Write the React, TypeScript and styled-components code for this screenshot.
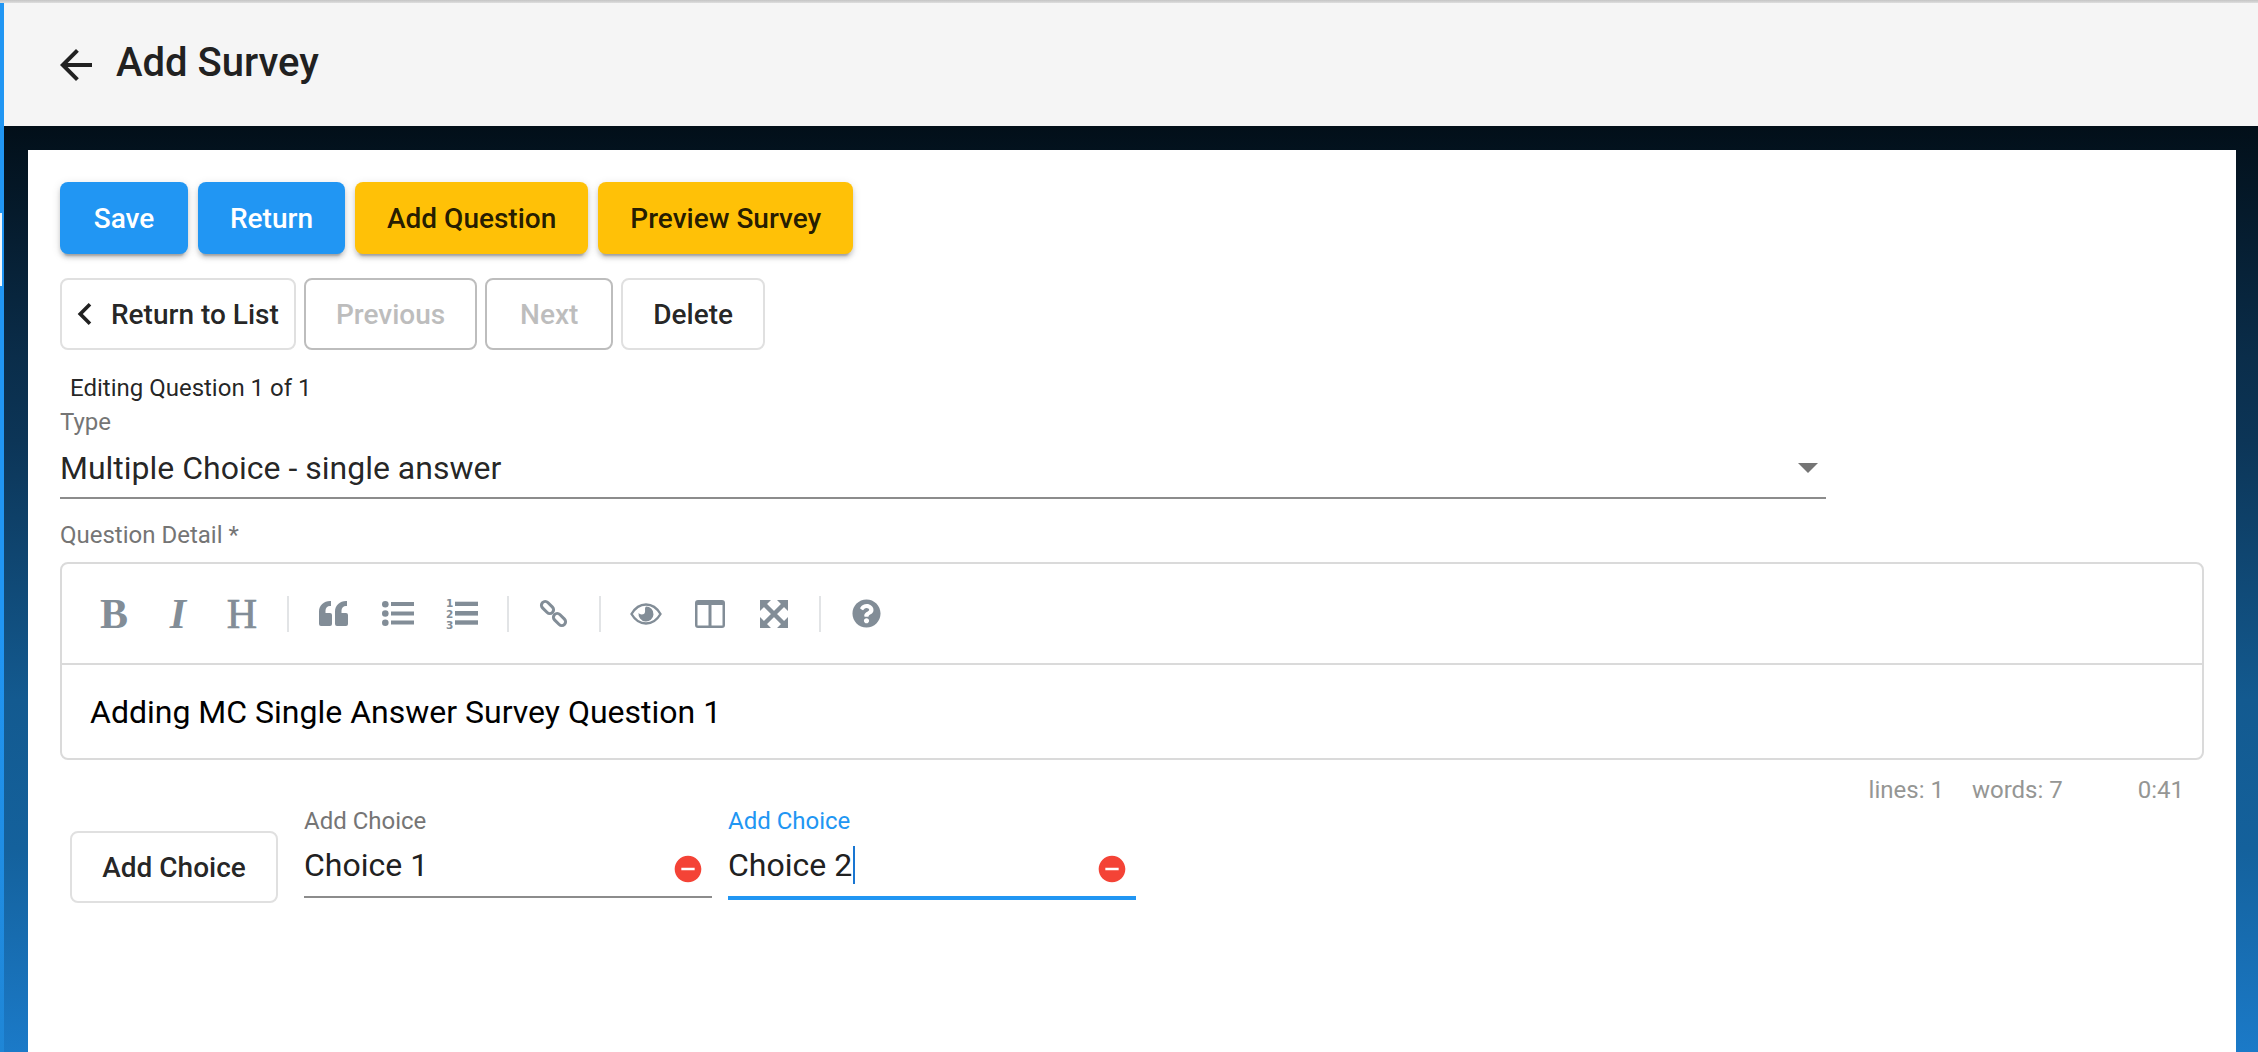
import React from 'react';
import styled, { createGlobalStyle } from 'styled-components';
import { FaQuestionCircle } from 'react-icons/fa';

const GlobalStyle = createGlobalStyle`
  html, body {
    margin: 0;
    padding: 0;
    background: #fff;
  }
  * {
    box-sizing: border-box;
  }
`;

const Page = styled.div`
  display: flex;
  flex-direction: column;
  width: 2258px;
  height: 1052px;
  overflow: hidden;
  font-family: Roboto, "Liberation Sans", sans-serif;
  color: rgba(0, 0, 0, 0.87);
`;

const TopEdge = styled.div`
  flex: none;
  height: 3px;
  background: linear-gradient(#c4c4c4, #dedede);
`;

const Shell = styled.div`
  flex: 1;
  display: flex;
  min-height: 0;
`;

const SideEdge = styled.div`
  position: relative;
  flex: none;
  width: 4px;
  background: linear-gradient(#2196f3 0%, #2196f3 60%, #1f86d6 100%);

  &::after {
    content: '';
    position: absolute;
    left: 0;
    top: 210px;
    width: 2px;
    height: 73px;
    background: #f2f7fb;
  }
`;

const Main = styled.div`
  flex: 1;
  display: flex;
  flex-direction: column;
  min-width: 0;
`;

const Header = styled.header`
  flex: none;
  display: flex;
  align-items: center;
  height: 123px;
  padding-left: 48px;
  background: #f5f5f5;
`;

const Title = styled.h1`
  margin: 0 0 3px 16px;
  font-size: 40px;
  line-height: 48px;
  font-weight: 500;
  color: #212121;
`;

const Backdrop = styled.div`
  flex: 1;
  display: flex;
  min-height: 0;
  padding: 24px 22px 0 24px;
  background: linear-gradient(
    #020f19 0%,
    #0a2d4a 25%,
    #0c3557 34%,
    #135a90 62%,
    #14619c 78%,
    #1b7ac8 100%
  );
`;

const Card = styled.main`
  flex: 1;
  padding: 32px;
  background: #fff;
`;

const ButtonRow = styled.div<{ $gap: number; $top?: number }>`
  display: flex;
  gap: ${({ $gap }) => $gap}px;
  margin-top: ${({ $top }) => $top || 0}px;
`;

type Tone = 'primary' | 'secondary' | 'outlined' | 'disabled';

const toneStyles: Record<Tone, string> = {
  primary: `
    padding: 0 32px;
    background: #2196f3;
    color: #fff;
    box-shadow: 0 6px 2px -4px rgba(0,0,0,.2), 0 4px 4px 0 rgba(0,0,0,.14), 0 2px 10px 0 rgba(0,0,0,.12);
  `,
  secondary: `
    padding: 0 32px;
    background: #ffc107;
    color: rgba(0,0,0,.87);
    box-shadow: 0 6px 2px -4px rgba(0,0,0,.2), 0 4px 4px 0 rgba(0,0,0,.14), 0 2px 10px 0 rgba(0,0,0,.12);
  `,
  outlined: `
    padding: 0 30px;
    background: #fff;
    border: 2px solid #e0e0e0;
    color: rgba(0,0,0,.87);
  `,
  disabled: `
    padding: 0 30px;
    background: #fff;
    border: 2px solid #bdbdbd;
    color: #bdbdbd;
  `,
};

const Button = styled.button<{ $tone: Tone }>`
  display: inline-flex;
  align-items: center;
  justify-content: center;
  min-width: 128px;
  height: 72px;
  border: 0;
  border-radius: 8px;
  font-family: inherit;
  font-size: 28px;
  font-weight: 500;
  white-space: nowrap;
  ${({ $tone }) => toneStyles[$tone]}
`;

const BackToList = styled(Button)`
  justify-content: flex-start;
  width: 236px;
  padding: 0 0 0 1px;
`;

const BackLabel = styled.span`
  margin-left: 4px;
`;

const AddChoice = styled(Button)`
  flex: none;
  width: 208px;
  margin-top: 24px;
`;

const EditingNote = styled.div`
  margin: 24px 0 0 10px;
  font-size: 24px;
  line-height: 28px;
`;

const FieldLabel = styled.label<{ $focused?: boolean }>`
  display: block;
  font-size: 24px;
  line-height: 28px;
  color: ${({ $focused }) => ($focused ? '#2196f3' : '#757575')};
`;

const TypeField = styled.div`
  width: 1766px;
  margin-top: 6px;
`;

const SelectValue = styled.div`
  display: flex;
  align-items: center;
  justify-content: space-between;
  height: 63px;
  padding: 3px 8px 0 0;
  border-bottom: 2px solid #8c8c8c;
  font-size: 32px;
`;

const DetailField = styled.div`
  margin-top: 22px;
`;

const Editor = styled.div`
  width: 2144px;
  height: 198px;
  margin-top: 13px;
  border: 2px solid #dadada;
  border-radius: 8px;
`;

const Toolbar = styled.div`
  display: flex;
  align-items: center;
  height: 101px;
  padding: 0 20px;
  border-bottom: 2px solid #dadada;
`;

const ToolButton = styled.span`
  display: flex;
  align-items: center;
  justify-content: center;
  width: 64px;
  height: 60px;
  color: #828d97;
`;

const SerifGlyph = styled.span<{ $italic?: boolean; $light?: boolean }>`
  font-family: "Liberation Serif", "Times New Roman", serif;
  font-size: 42px;
  line-height: 42px;
  font-weight: ${({ $light }) => ($light ? 400 : 700)};
  font-style: ${({ $italic }) => ($italic ? 'italic' : 'normal')};
  -webkit-text-stroke: ${({ $light }) => ($light ? '0.7px #828d97' : '0')};
`;

const ToolDivider = styled.i`
  flex: none;
  width: 28px;
  display: flex;
  justify-content: center;

  &::before {
    content: '';
    width: 2px;
    height: 36px;
    background: #e2e4e6;
  }
`;

const EditorBody = styled.div`
  display: flex;
  align-items: center;
  height: 93px;
  padding-left: 28px;
  font-size: 32px;
  color: #000;
`;

const StatusBar = styled.div`
  display: flex;
  justify-content: flex-end;
  width: 2144px;
  height: 28px;
  margin-top: 16px;
  padding-right: 20px;
  font-size: 24px;
  line-height: 28px;
  color: #959694;
`;

const StatusItem = styled.span<{ $left: number }>`
  margin-left: ${({ $left }) => $left}px;
`;

const ChoiceRow = styled.div`
  display: flex;
  align-items: flex-start;
  margin: 3px 0 0 10px;
`;

const ChoiceField = styled.div<{ $left: number }>`
  flex: none;
  width: 408px;
  margin-left: ${({ $left }) => $left}px;
`;

const ChoiceInput = styled.div<{ $focused?: boolean }>`
  display: flex;
  align-items: center;
  justify-content: space-between;
  height: ${({ $focused }) => ($focused ? 65 : 63)}px;
  padding: 0 8px 0 0;
  border-bottom: ${({ $focused }) => ($focused ? '4px solid #2196f3' : '2px solid #8c8c8c')};
  font-size: 32px;
  color: #212121;
`;

const ChoiceText = styled.span`
  display: inline-flex;
  align-items: center;
  margin-bottom: 2px;
`;

const Caret = styled.span`
  width: 2px;
  height: 38px;
  margin-left: 1px;
  background: #1976d2;
`;

const RemoveIcon = styled.svg`
  flex: none;
  width: 32px;
  height: 32px;
  margin-top: 7px;
  fill: #f44336;
`;

const Icon = styled.svg`
  display: block;
  fill: currentColor;
`;

const BackIcon = styled(Icon)`
  color: #212121;
`;

const DropIcon = styled(Icon)`
  color: #757575;
`;

const Digit = styled.text`
  font-family: "DejaVu Sans", sans-serif;
  font-size: 10.500px;
  font-weight: 700;
`;

const BackArrow = () => (
  <BackIcon width="48" height="48" viewBox="0 0 24 24">
    <path d="M20 11H7.83l5.59-5.59L12 4l-8 8 8 8 1.41-1.41L7.83 13H20v-2z" />
  </BackIcon>
);

const ChevronLeft = () => (
  <Icon width="44" height="44" viewBox="0 0 24 24">
    <path d="M15.41 7.41L14 6l-6 6 6 6 1.41-1.41L10.83 12z" />
  </Icon>
);

const DropArrow = () => (
  <DropIcon width="20" height="10" viewBox="0 0 20 10">
    <polygon points="0,0 20,0 10,10" />
  </DropIcon>
);

const Remove = () => (
  <RemoveIcon viewBox="0 0 24 24">
    <path d="M12 2C6.48 2 2 6.48 2 12s4.48 10 10 10 10-4.48 10-10S17.52 2 12 2zm5 11H7v-2h10v2z" />
  </RemoveIcon>
);

const QuoteIcon = () => (
  <Icon width="30" height="25" viewBox="0 0 30 25">
    <path d="M2 25h9a2 2 0 0 0 2-2v-9a2 2 0 0 0-2-2H6.5V9.5C6.5 7 8.5 5 11 5h1V0h-1C5 0 0 4.5 0 10.5V23a2 2 0 0 0 2 2z" />
    <path d="M18 25h9a2 2 0 0 0 2-2v-9a2 2 0 0 0-2-2h-4.500V9.500C22.500 7 24.500 5 27 5h1V0h-1c-6 0-11 4.500-11 10.500V23a2 2 0 0 0 2 2z" />
  </Icon>
);

const BulletIcon = () => (
  <Icon width="32" height="25" viewBox="0 0 32 25">
    <circle cx="3.300" cy="3.300" r="3.300" />
    <circle cx="3.300" cy="12.500" r="3.300" />
    <circle cx="3.300" cy="21.700" r="3.300" />
    <rect x="9" y="1" width="23" height="4" />
    <rect x="9" y="10.500" width="23" height="4" />
    <rect x="9" y="19.500" width="23" height="4" />
  </Icon>
);

const NumberIcon = () => (
  <Icon width="32" height="32" viewBox="0 0 32 32">
    <Digit x="0" y="8.500">1</Digit>
    <Digit x="0" y="19.500">2</Digit>
    <Digit x="0" y="31">3</Digit>
    <rect x="9" y="3.700" width="23" height="4.300" />
    <rect x="9" y="13" width="23" height="4.600" />
    <rect x="9" y="22.300" width="23" height="4.400" />
  </Icon>
);

const LinkIcon = () => (
  <Icon width="30" height="30" viewBox="0 0 30 30">
    <g fill="none" stroke="currentColor" strokeWidth="3">
      <rect x="1.500" y="4.750" width="14" height="7.500" rx="3.700" transform="rotate(45 8.500 8.500)" />
      <rect x="13.500" y="16.750" width="14" height="7.500" rx="3.700" transform="rotate(45 20.500 20.500)" />
    </g>
  </Icon>
);

const EyeIcon = () => (
  <Icon width="32" height="22" viewBox="0 0 32 22">
    <path
      d="M1.500 11C5 5 10 1.500 16 1.500S27 5 30.500 11C27 17 22 20.500 16 20.500S5 17 1.500 11z"
      fill="none"
      stroke="currentColor"
      strokeWidth="2.400"
    />
    <path d="M16 3.500a7.500 7.500 0 1 1-7.400 6.300c.6 1 1.700 1.700 3 1.700a3.500 3.500 0 0 0 3.500-3.500c0-1.800-.5-3.200.900-4.500z" />
  </Icon>
);

const ColumnsIcon = () => (
  <Icon width="30" height="28" viewBox="0 0 30 28">
    <path d="M3 0h24a3 3 0 0 1 3 3v22a3 3 0 0 1-3 3H3a3 3 0 0 1-3-3V3a3 3 0 0 1 3-3zm-.500 5v20.500h11V5zm14 0v20.500h11V5z" fillRule="evenodd" />
  </Icon>
);

const ExpandIcon = () => (
  <Icon width="28" height="28" viewBox="0 0 28 28">
    <path d="M0 0h11L0 11zM28 0v11L17 0zM0 28V17l11 11zM28 28H17l11-11z" />
    <path d="M4 4l20 20M24 4L4 24" fill="none" stroke="currentColor" strokeWidth="4.500" />
  </Icon>
);

const App: React.FC = () => (
  <Page>
    <GlobalStyle />
    <TopEdge />
    <Shell>
      <SideEdge />
      <Main>
        <Header>
          <BackArrow />
          <Title>Add Survey</Title>
        </Header>
        <Backdrop>
          <Card>
            <ButtonRow $gap={10}>
              <Button $tone="primary">Save</Button>
              <Button $tone="primary">Return</Button>
              <Button $tone="secondary">Add Question</Button>
              <Button $tone="secondary">Preview Survey</Button>
            </ButtonRow>
            <ButtonRow $gap={8} $top={24}>
              <BackToList $tone="outlined">
                <ChevronLeft />
                <BackLabel>Return to List</BackLabel>
              </BackToList>
              <Button $tone="disabled">Previous</Button>
              <Button $tone="disabled">Next</Button>
              <Button $tone="outlined">Delete</Button>
            </ButtonRow>
            <EditingNote>Editing Question 1 of 1</EditingNote>
            <TypeField>
              <FieldLabel>Type</FieldLabel>
              <SelectValue>
                <span>Multiple Choice - single answer</span>
                <DropArrow />
              </SelectValue>
            </TypeField>
            <DetailField>
              <FieldLabel>Question Detail *</FieldLabel>
              <Editor>
                <Toolbar>
                  <ToolButton><SerifGlyph>B</SerifGlyph></ToolButton>
                  <ToolButton><SerifGlyph $italic>I</SerifGlyph></ToolButton>
                  <ToolButton><SerifGlyph $light>H</SerifGlyph></ToolButton>
                  <ToolDivider />
                  <ToolButton><QuoteIcon /></ToolButton>
                  <ToolButton><BulletIcon /></ToolButton>
                  <ToolButton><NumberIcon /></ToolButton>
                  <ToolDivider />
                  <ToolButton><LinkIcon /></ToolButton>
                  <ToolDivider />
                  <ToolButton><EyeIcon /></ToolButton>
                  <ToolButton><ColumnsIcon /></ToolButton>
                  <ToolButton><ExpandIcon /></ToolButton>
                  <ToolDivider />
                  <ToolButton><FaQuestionCircle size={29} /></ToolButton>
                </Toolbar>
                <EditorBody>Adding MC Single Answer Survey Question 1</EditorBody>
              </Editor>
            </DetailField>
            <StatusBar>
              <StatusItem $left={0}>lines: 1</StatusItem>
              <StatusItem $left={28}>words: 7</StatusItem>
              <StatusItem $left={75}>0:41</StatusItem>
            </StatusBar>
            <ChoiceRow>
              <AddChoice $tone="outlined">Add Choice</AddChoice>
              <ChoiceField $left={26}>
                <FieldLabel>Add Choice</FieldLabel>
                <ChoiceInput>
                  <ChoiceText>Choice 1</ChoiceText>
                  <Remove />
                </ChoiceInput>
              </ChoiceField>
              <ChoiceField $left={16}>
                <FieldLabel $focused>Add Choice</FieldLabel>
                <ChoiceInput $focused>
                  <ChoiceText>
                    Choice 2
                    <Caret />
                  </ChoiceText>
                  <Remove />
                </ChoiceInput>
              </ChoiceField>
            </ChoiceRow>
          </Card>
        </Backdrop>
      </Main>
    </Shell>
  </Page>
);

export default App;
